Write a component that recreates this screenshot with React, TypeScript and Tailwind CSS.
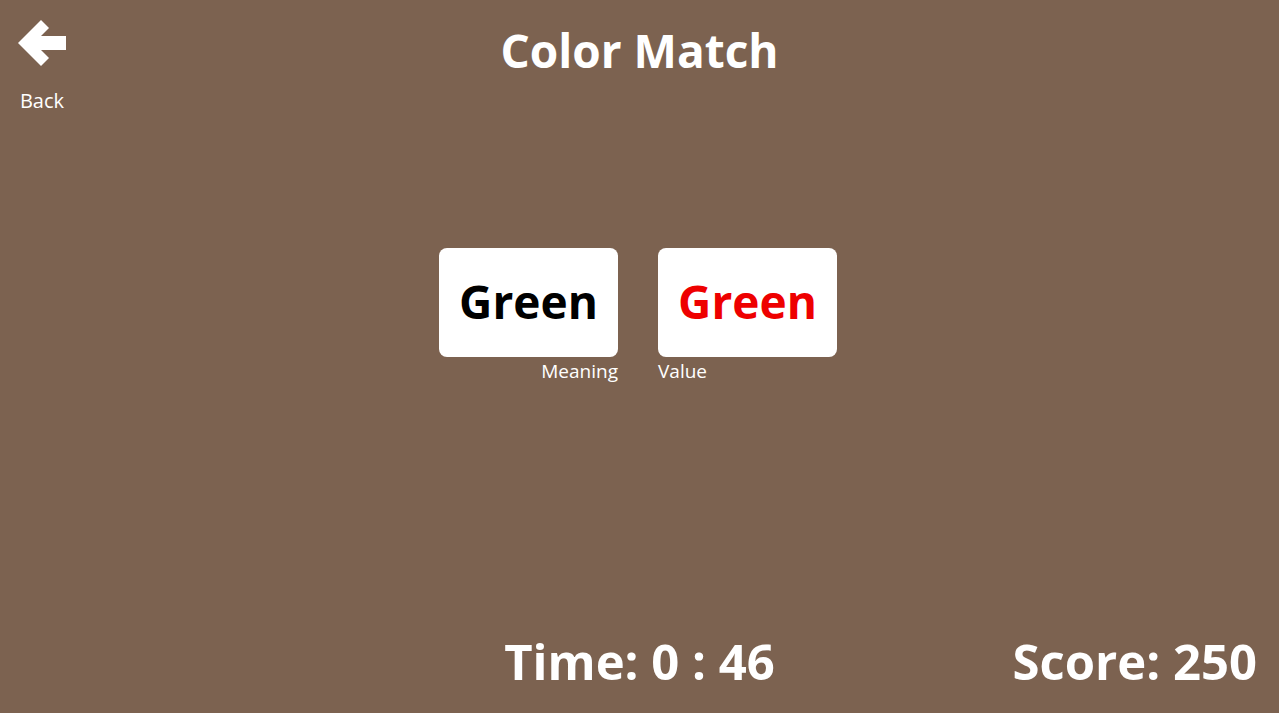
import { useState } from 'react';

const font = { fontFamily: '"Open Sans", "Liberation Sans", sans-serif' };

function BackArrow() {
  return (
    <svg width="50" height="50" viewBox="18 18 50 50" aria-hidden="true">
      <polygon
        points="19,43 42,20 50,28 42,36 67,36 67,50 42,50 50,58 42,66"
        fill="#ffffff"
      />
    </svg>
  );
}

function WordCard({ word, color }: { word: string; color: string }) {
  return (
    <div className="flex h-[109px] w-[179px] items-center justify-center rounded-lg bg-white pb-[4px]">
      <span className={`text-[46px] font-bold leading-none ${color}`}>{word}</span>
    </div>
  );
}

export default function App() {
  const [score] = useState(250);
  const [time] = useState('0 : 46');

  return (
    <div
      className="flex h-[713px] w-full flex-col bg-[#7c6250] text-white"
      style={font}
    >
      <header className="grid grid-cols-[1fr_auto_1fr] items-start">
        <button
          type="button"
          className="flex w-[84px] flex-col items-center pt-[18px] text-white"
        >
          <BackArrow />
          <span className="mt-[23px] text-[20px] leading-none">Back</span>
        </button>
        <h1 className="pt-[27px] text-[46px] font-bold leading-none">Color Match</h1>
        <div />
      </header>

      <main className="flex flex-1 flex-col items-center pr-[3px] pt-[137px]">
        <div className="flex gap-10">
          <div className="flex flex-col items-end">
            <WordCard word="Green" color="text-black" />
            <span className="mt-[2px] text-[19px] leading-6">Meaning</span>
          </div>
          <div className="flex flex-col items-start">
            <WordCard word="Green" color="text-[#ee0000]" />
            <span className="mt-[2px] text-[19px] leading-6">Value</span>
          </div>
        </div>
      </main>

      <footer className="grid grid-cols-3 items-end pb-[27px]">
        <div />
        <div className="text-center text-[49px] font-bold leading-none">Time: {time}</div>
        <div className="pr-[22px] text-right text-[49px] font-bold leading-none">
          Score: {score}
        </div>
      </footer>
    </div>
  );
}
